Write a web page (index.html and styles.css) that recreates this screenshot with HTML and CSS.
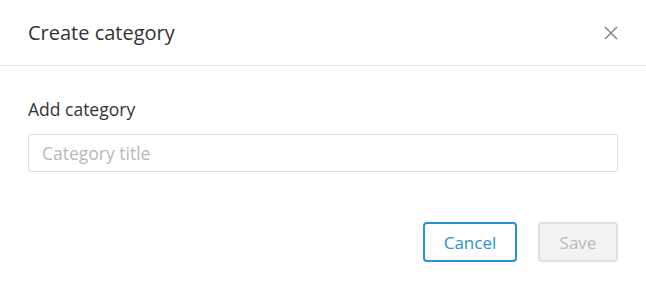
FILE: index.html
```html
<!DOCTYPE html>
<html lang="en">
<head>
    <meta charset="UTF-8">
    <meta name="viewport" content="width=device-width, initial-scale=1.0">
    <title>Create category</title>
    <link rel="stylesheet" href="styles.css">
</head>
<body>
    <!-- Create category dialog -->
    <div class="dialog">
        <div class="dialog-header">
            <h2>Create category</h2>
            <button class="close-button" aria-label="Close">
                <svg width="14" height="14" viewBox="0 0 14 14">
                    <path d="M1 1 L13 13 M13 1 L1 13" stroke="#8a8a8a" stroke-width="1.6" fill="none"/>
                </svg>
            </button>
        </div>

        <div class="dialog-body">
            <label for="title">Add category</label>
            <input type="text" id="title" placeholder="Category title">
        </div>

        <div class="dialog-footer">
            <button class="cancel">Cancel</button>
            <button class="save" disabled>Save</button>
        </div>
    </div>
</body>
</html>
```

FILE: styles.css
```css
body {
    font-family: "Open Sans", Arial, sans-serif;
    margin: 0;
    padding: 0;
    background: #fff;
    color: #333;
}

.dialog {
    width: 646px;
}

.dialog-header {
    display: flex;
    justify-content: space-between;
    align-items: center;
    height: 66px;
    padding: 0 28px;
    border-bottom: 1px solid #e8e8e8;
    box-sizing: border-box;
}

.dialog-header h2 {
    margin: 0;
    font-size: 20px;
    font-weight: normal;
    color: #333;
}

.close-button {
    background: none;
    border: none;
    padding: 0;
    width: 14px;
    height: 14px;
    cursor: pointer;
    display: flex;
}

.dialog-body {
    padding: 31px 28px 0;
    display: flex;
    flex-direction: column;
}

.dialog-body label {
    font-size: 17.5px;
    line-height: 24px;
    margin-bottom: 13px;
}

.dialog-body input {
    height: 38px;
    padding: 0 13px;
    border: 1px solid #dcdcdc;
    border-radius: 3px;
    font-family: inherit;
    font-size: 17.5px;
    color: #333;
    box-sizing: border-box;
}

.dialog-body input::placeholder {
    color: #b8b8b8;
}

.dialog-footer {
    display: flex;
    justify-content: flex-end;
    gap: 21px;
    padding: 50px 28px 0;
}

.dialog-footer button {
    height: 40px;
    border-radius: 4px;
    font-family: inherit;
    font-size: 17px;
    box-sizing: border-box;
    cursor: pointer;
}

.dialog-footer .cancel {
    width: 94px;
    background: #fff;
    border: 2px solid #2b8fd3;
    color: #2b8fd3;
}

.dialog-footer .save {
    width: 80px;
    background: #f3f3f3;
    border: 2px solid #e0e0e0;
    color: #bbb;
    cursor: default;
}
```
